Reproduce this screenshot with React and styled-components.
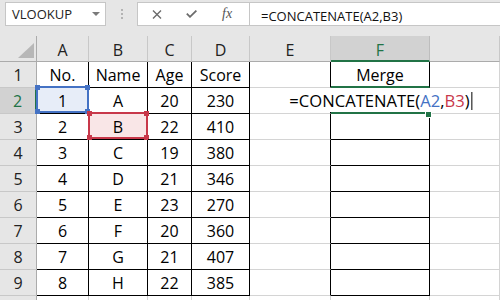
import styled, { createGlobalStyle } from "styled-components";

const GREEN = "#217346";
const BLUE = "#4472c4";
const RED = "#c8384a";
const GRID = "#d4d4d4";
const HEAD_LINE = "#ababab";
const BLACK = "#000";

// the last column only shows its blank left part in the window
const COLS = ["A", "B", "C", "D", "E", "F", ""];

const data = [
  ["No.", "Name", "Age", "Score"],
  [1, "A", 20, 230],
  [2, "B", 22, 410],
  [3, "C", 19, 380],
  [4, "D", 21, 346],
  [5, "E", 23, 270],
  [6, "F", 20, 360],
  [7, "G", 21, 407],
  [8, "H", 22, 385],
];

const GlobalStyle = createGlobalStyle`
  body {
    margin: 0;
    background: #fff;
    overflow: hidden;
    font-family: "Open Sans", "Noto Sans", sans-serif;
  }
`;

const Frame = styled.div`
  width: 500px;
  height: 300px;
  overflow: hidden;
  background: #fff;
`;

const Toolbar = styled.div`
  height: 36px;
  box-sizing: border-box;
  background: #e6e6e6;
  display: flex;
  align-items: flex-start;
  padding: 2px 0 0 5px;
`;

const NameBox = styled.div`
  width: 101px;
  height: 24px;
  box-sizing: border-box;
  border: 1px solid #c6c6c6;
  background: #fff;
  display: flex;
  align-items: center;
  justify-content: space-between;
  padding: 0 5px 0 6px;
  font-size: 13px;
  color: #222;
`;

const DropArrow = styled.span`
  width: 0;
  height: 0;
  border-left: 4px solid transparent;
  border-right: 4px solid transparent;
  border-top: 4px solid #7a7a7a;
`;

const Grip = styled.div`
  width: 31px;
  height: 24px;
  display: flex;
  flex-direction: column;
  align-items: center;
  justify-content: center;
  gap: 2px;
  span {
    width: 2px;
    height: 2px;
    background: #b3b3b3;
  }
`;

const FxBox = styled.div`
  width: 113px;
  height: 24px;
  box-sizing: border-box;
  border: 1px solid #c6c6c6;
  background: #fff;
  display: flex;
  align-items: center;
  gap: 24px;
  padding-left: 14px;
  color: #666;
`;

const FxText = styled.span`
  font-family: "Liberation Serif", serif;
  font-style: italic;
  font-size: 14px;
  color: #555;
  margin-left: 1px;
`;

const FormulaInput = styled.div`
  flex: 1;
  height: 24px;
  margin-left: -1px;
  box-sizing: border-box;
  border: 1px solid #c6c6c6;
  border-right: none;
  background: #fff;
  display: flex;
  align-items: center;
  padding: 3px 0 0 11px;
  font-size: 13px;
  color: #111;
  white-space: nowrap;
`;

const Sheet = styled.div`
  display: grid;
  grid-template-columns: 37px 52px 59px 44px 58px 81px 99px 1fr;
  grid-auto-rows: 26px;
`;

const Corner = styled.div`
  box-sizing: border-box;
  background: #e6e6e6;
  border-right: 1px solid ${HEAD_LINE};
  border-bottom: 1px solid ${HEAD_LINE};
  display: flex;
  align-items: flex-end;
  justify-content: flex-end;
  padding: 0 2px 3px 0;
`;

const ColHead = styled.div`
  box-sizing: border-box;
  background: ${(p) => (p.$active ? "#d2d2d2" : "#e6e6e6")};
  color: ${(p) => (p.$active ? GREEN : "#222")};
  border-right: 1px solid ${(p) => (p.$active ? "#bdbdbd" : "#c8c8c8")};
  border-bottom: ${(p) => (p.$active ? `2px solid ${GREEN}` : `1px solid ${HEAD_LINE}`)};
  display: flex;
  align-items: center;
  justify-content: center;
  padding-top: ${(p) => (p.$active ? 4 : 3)}px;
  font-size: 16px;
`;

const RowHead = styled.div`
  box-sizing: border-box;
  background: ${(p) => (p.$active ? "#d2d2d2" : "#e6e6e6")};
  color: ${(p) => (p.$active ? GREEN : "#222")};
  border-right: ${(p) => (p.$active ? `2px solid ${GREEN}` : `1px solid ${HEAD_LINE}`)};
  border-bottom: 1px solid #c8c8c8;
  display: flex;
  align-items: center;
  justify-content: center;
  padding-top: 1px;
  font-size: 16px;
`;

const Cell = styled.div`
  position: relative;
  box-sizing: border-box;
  border-right: 1px solid ${(p) => p.$right};
  border-bottom: ${(p) => p.$bw}px solid ${(p) => p.$bottom};
  display: flex;
  align-items: center;
  justify-content: center;
  padding-top: 1px;
  font-size: 16px;
  color: #000;
  white-space: nowrap;
`;

const Value = styled.span`
  position: relative;
`;

const Mark = styled.div`
  position: absolute;
  top: -2px;
  left: -1px;
  right: -1px;
  bottom: 0;
  border: 2px solid ${(p) => p.$color};
  background: ${(p) => p.$fill};
`;

const Knob = styled.span`
  position: absolute;
  width: 5px;
  height: 5px;
  background: ${(p) => p.$color};
  ${(p) => (p.$top ? "top: -3px;" : "bottom: -3px;")}
  ${(p) => (p.$left ? "left: -3px;" : "right: -3px;")}
`;

const Editor = styled.span`
  position: absolute;
  top: 0;
  bottom: 0;
  left: 50%;
  transform: translateX(-50%);
  z-index: 2;
  background: #fff;
  display: flex;
  align-items: center;
  padding: 1px 2px 0 4px;
  font-size: 16.6px;
  white-space: nowrap;
  &::after {
    content: "";
    width: 1px;
    height: 18px;
    margin-left: 2px;
    background: #000;
  }
`;

const Ref = styled.span`
  color: ${(p) => p.$color};
`;

const FillHandle = styled.span`
  position: absolute;
  right: -2px;
  bottom: -5px;
  width: 5px;
  height: 5px;
  background: ${GREEN};
  box-shadow: 0 0 0 1px #fff;
  z-index: 3;
`;

const Selection = ({ color, fill }) => (
  <Mark $color={color} $fill={fill}>
    <Knob $color={color} $top $left />
    <Knob $color={color} $top />
    <Knob $color={color} $left />
    <Knob $color={color} />
  </Mark>
);

const CloseIcon = () => (
  <svg width="10" height="9" viewBox="0 0 10 9">
    <path d="M1 0.5 L9 8.5 M9 0.5 L1 8.5" stroke="#6b6b6b" strokeWidth="1.4" fill="none" />
  </svg>
);

const CheckIcon = () => (
  <svg width="11" height="8" viewBox="0 0 11 8">
    <path d="M0.8 3.6 L4 6.8 L10.4 0.6" stroke="#6b6b6b" strokeWidth="1.8" fill="none" />
  </svg>
);

const CornerTriangle = () => (
  <svg width="16" height="15" viewBox="0 0 16 15">
    <polygon points="16,0 16,15 0,15" fill="#b7b7b7" />
  </svg>
);

function borders(r, c) {
  // r: 1-based row, c: 0-based column index (A = 0)
  if (r <= 9 && c <= 3) return { right: BLACK, bottom: BLACK, bw: 1 };
  if (r <= 9 && c === 4) return { right: BLACK, bottom: GRID, bw: 1 };
  if (r <= 9 && c === 5) {
    if (r === 1 || r === 2) return { right: BLACK, bottom: GREEN, bw: 2 };
    return { right: BLACK, bottom: BLACK, bw: 1 };
  }
  return { right: GRID, bottom: GRID, bw: 1 };
}

function cellValue(r, c) {
  if (r <= 9 && c <= 3) return data[r - 1][c];
  if (r === 1 && c === 5) return "Merge";
  return null;
}

export default function App() {
  const rows = Array.from({ length: 10 }, (_, i) => i + 1);

  return (
    <Frame>
      <GlobalStyle />
      <Toolbar>
        <NameBox>
          VLOOKUP
          <DropArrow />
        </NameBox>
        <Grip>
          <span />
          <span />
          <span />
        </Grip>
        <FxBox>
          <CloseIcon />
          <CheckIcon />
          <FxText>fx</FxText>
        </FxBox>
        <FormulaInput>=CONCATENATE(A2,B3)</FormulaInput>
      </Toolbar>

      <Sheet>
        <Corner>
          <CornerTriangle />
        </Corner>
        {COLS.map((col, c) => (
          <ColHead key={`c${c}`} $active={col === "F"}>
            {col}
          </ColHead>
        ))}

        {rows.map((r) => [
          // row 10 only peeks in at the bottom edge, its number stays hidden
          <RowHead key={`h${r}`} $active={r === 2}>
            {r < 10 ? r : null}
          </RowHead>,
          ...COLS.map((col, c) => {
            const b = borders(r, c);
            const v = cellValue(r, c);
            return (
              <Cell key={`${c}-${r}`} $right={b.right} $bottom={b.bottom} $bw={b.bw}>
                {r === 2 && c === 0 && <Selection color={BLUE} fill="#e7edf8" />}
                {r === 3 && c === 1 && <Selection color={RED} fill="#f9e6e7" />}
                {v !== null && <Value>{v}</Value>}
                {r === 2 && c === 5 && (
                  <>
                    <Editor>
                      =CONCATENATE(<Ref $color={BLUE}>A2</Ref>,<Ref $color={RED}>B3</Ref>)
                    </Editor>
                    <FillHandle />
                  </>
                )}
              </Cell>
            );
          }),
        ])}
      </Sheet>
    </Frame>
  );
}
